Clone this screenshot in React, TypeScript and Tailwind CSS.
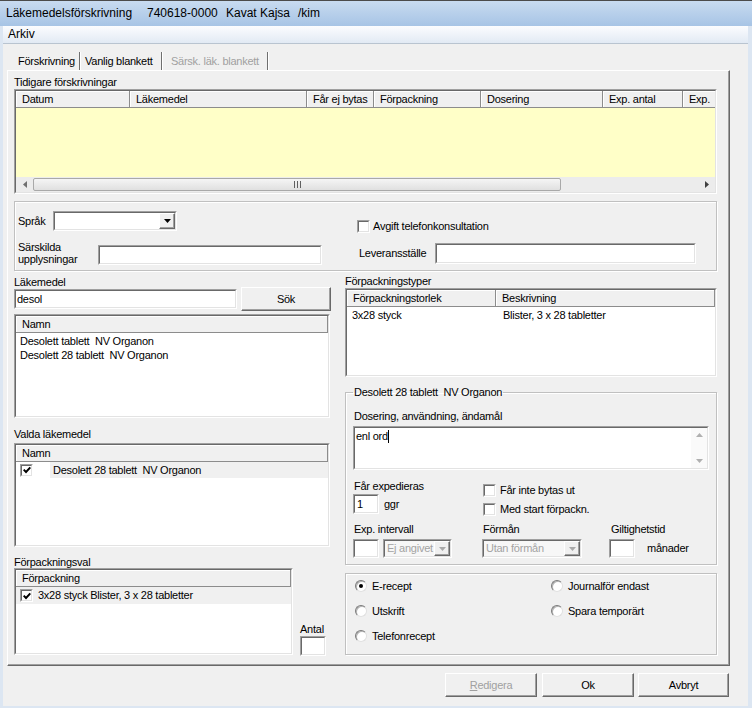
import React from "react"

const sunkO = "border border-t-[#a0a0a0] border-l-[#a0a0a0] border-b-white border-r-white"
const sunkI = "border border-t-[#696969] border-l-[#696969] border-b-[#e3e3e3] border-r-[#e3e3e3]"
const raised = "border border-t-white border-l-white border-b-[#696969] border-r-[#696969] shadow-[inset_-1px_-1px_0_#a0a0a0]"
const group = "border border-[#c0c0c0] shadow-[inset_1px_1px_0_#fff,1px_1px_0_#fff]"

function Sunk({ className = "", inner = "bg-white", children }: { className?: string; inner?: string; children?: React.ReactNode }) {
  return (
    <div className={`${sunkO} ${className}`}>
      <div className={`${sunkI} ${inner} w-full h-full`}>{children}</div>
    </div>
  )
}

function Check({ on = false }: { on?: boolean }) {
  return (
    <Sunk className="w-[13px] h-[13px] shrink-0" inner="bg-white flex items-center justify-center">
      {on && (
        <svg width="8" height="8" viewBox="0 0 8 8">
          <path d="M0.7 3.6 L3 6 L7.3 1.3" stroke="#000" strokeWidth="1.9" fill="none" />
        </svg>
      )}
    </Sunk>
  )
}

function Radio({ on = false }: { on?: boolean }) {
  return (
    <span className="w-[12px] h-[12px] rounded-full bg-white border border-t-[#7a7a7a] border-l-[#7a7a7a] border-b-[#e0e0e0] border-r-[#e0e0e0] shadow-[inset_1px_1px_0_#b4b4b4] flex items-center justify-center shrink-0">
      {on && <span className="w-[4px] h-[4px] rounded-full bg-black" />}
    </span>
  )
}

function Arrow({ dir, color = "#000" }: { dir: "down" | "up" | "left" | "right"; color?: string }) {
  const d = { down: "M0 0 H7 L3.5 4Z", up: "M0 4 H7 L3.5 0Z", left: "M4 0 V7 L0 3.5Z", right: "M0 0 V7 L4 3.5Z" }[dir]
  const [w, h] = dir === "down" || dir === "up" ? [7, 4] : [4, 7]
  return (
    <svg width={w} height={h} viewBox={`0 0 ${w} ${h}`}>
      <path d={d} fill={color} />
    </svg>
  )
}

function Combo({ className = "", text = "", disabled = false }: { className?: string; text?: string; disabled?: boolean }) {
  return (
    <Sunk className={className} inner={`${disabled ? "bg-[#f7f7f7]" : "bg-white"} flex`}>
      <span className={`flex-1 pl-[2px] leading-[15px] whitespace-nowrap overflow-hidden ${disabled ? "text-[#a3a3a3]" : ""}`}>{text}</span>
      <span className={`w-[16px] h-full shrink-0 bg-[#f0f0f0] ${raised} flex items-center justify-center`}>
        <Arrow dir="down" color={disabled ? "#a8a8a8" : "#000"} />
      </span>
    </Sunk>
  )
}

function Head({ cols }: { cols: { t: string; c: string }[] }) {
  return (
    <div className="flex h-[17px] shrink-0 bg-[#f0f0f0] border-b border-b-[#8c8c8c] shadow-[inset_0_1px_0_#fff] overflow-hidden">
      {cols.map(col => (
        <div key={col.t} className={`${col.c} shrink-0 h-full flex items-center pl-[6px] whitespace-nowrap overflow-hidden border-r border-r-[#8c8c8c] shadow-[inset_1px_0_0_#fff]`}>
          {col.t}
        </div>
      ))}
    </div>
  )
}

function Btn({ className = "", children }: { className?: string; children: React.ReactNode }) {
  return <div className={`h-[24px] bg-[#f0f0f0] ${raised} flex items-center justify-center ${className}`}>{children}</div>
}

export default function App() {
  return (
    <div className="w-[752px] h-[708px] flex flex-col bg-[#f0f0f0] overflow-hidden text-[11px] leading-[13px] tracking-[-0.25px] text-black font-['Liberation_Sans',Arial,sans-serif]">
      {/* title bar */}
      <div className="h-[26px] shrink-0 border-t border-t-[#4b4b4b] bg-linear-to-b from-[#c8dbf0] to-[#a7c4e5] flex items-center pl-[6px] text-[12px] tracking-normal whitespace-nowrap">
        <span className="w-[141px]">Läkemedelsförskrivning</span>
        <span className="w-[79px]">740618-0000</span>
        <span className="w-[72px]">Kavat Kajsa</span>
        <span>/kim</span>
      </div>

      <div className="flex-1 flex flex-col border-l-[3px] border-r-[4px] border-b-[2px] border-[#dce6f2]">
        {/* menu */}
        <div className="h-[18px] shrink-0 border-b border-b-[#b9c4d0] bg-linear-to-b from-[#fbfcfe] to-[#e2eaf4] flex items-center pl-[5px] text-[12px] tracking-normal">
          Arkiv
        </div>

        <div className="flex-1 flex flex-col pl-[4px] pt-[6px]">
          {/* tabs */}
          <div className="flex h-[20px] items-end pl-[5px]">
            <div className="h-[18px] w-[68px] pl-[6px] flex items-center border-r border-r-[#6f6f6f] shadow-[1px_0_0_#fff]">Förskrivning</div>
            <div className="h-[18px] w-[82px] pl-[5px] flex items-center border-r border-r-[#6f6f6f] shadow-[1px_0_0_#fff]">Vanlig blankett</div>
            <div className="h-[18px] w-[106px] pl-[9px] flex items-center text-[#a0a0a0] border-r border-r-[#6f6f6f] shadow-[1px_0_0_#fff]">Särsk. läk. blankett</div>
          </div>

          {/* tab page */}
          <div className="w-[723px] h-[596px] shrink-0 border border-l-white border-t-white border-r-[#696969] border-b-[#696969] shadow-[inset_-1px_-1px_0_#a0a0a0] pl-[6px] pt-[5px] flex flex-col">
            <div className="h-[13px]">Tidigare förskrivningar</div>
            <Sunk className="w-[703px] h-[105px]" inner="flex flex-col bg-[#ffffc8] overflow-hidden">
              <Head
                cols={[
                  { t: "Datum", c: "w-[114px]" },
                  { t: "Läkemedel", c: "w-[177px]" },
                  { t: "Får ej bytas", c: "w-[67px]" },
                  { t: "Förpackning", c: "w-[107px]" },
                  { t: "Dosering", c: "w-[122px]" },
                  { t: "Exp. antal", c: "w-[80px]" },
                  { t: "Exp.", c: "w-[40px]" },
                ]}
              />
              <div className="flex-1" />
              <div className="h-[15px] shrink-0 flex items-center bg-[#ececec]">
                <div className="w-[17px] flex justify-center">
                  <Arrow dir="left" color="#707070" />
                </div>
                <div className="w-[528px] h-[13px] rounded-[2px] border border-[#a9a9a9] bg-linear-to-b from-[#f5f5f5] to-[#e0e0e0] flex items-center justify-center">
                  <svg width="7" height="7" viewBox="0 0 7 7">
                    <rect x="0" y="0" width="1" height="7" fill="#606060" />
                    <rect x="3" y="0" width="1" height="7" fill="#606060" />
                    <rect x="6" y="0" width="1" height="7" fill="#606060" />
                  </svg>
                </div>
                <div className="flex-1" />
                <div className="w-[17px] flex justify-center">
                  <Arrow dir="right" color="#404040" />
                </div>
              </div>
            </Sunk>

            {/* språk group */}
            <div className={`mt-[7px] w-[703px] h-[70px] shrink-0 flex ${group}`}>
              <div className="w-[330px] flex flex-col">
                <div className="mt-[9px] h-[20px] flex items-center">
                  <span className="w-[38px] pl-[3px]">Språk</span>
                  <Combo className="w-[124px] h-[20px]" />
                </div>
                <div className="mt-[10px] flex items-start">
                  <span className="w-[83px] pl-[3px] leading-[12px]">
                    Särskilda
                    <br />
                    upplysningar
                  </span>
                  <Sunk className="mt-[4px] w-[224px] h-[20px]" />
                </div>
              </div>
              <div className="flex-1 flex flex-col">
                <div className="mt-[18px] h-[13px] flex items-center">
                  <span className="ml-[12px]">
                    <Check />
                  </span>
                  <span className="ml-[3px]">Avgift telefonkonsultation</span>
                </div>
                <div className="mt-[10px] h-[21px] flex items-center">
                  <span className="ml-[14px] w-[76px]">Leveransställe</span>
                  <Sunk className="w-[261px] h-[21px]" />
                </div>
              </div>
            </div>

            <div className="flex">
              {/* left column */}
              <div className="w-[317px] flex flex-col">
                <div className="mt-[5px] h-[12px] leading-[12px]">Läkemedel</div>
                <div className="h-[22px] flex items-center">
                  <Sunk className="w-[223px] h-[20px]" inner="bg-white pl-[1px] leading-[16px]">
                    desol
                  </Sunk>
                  <Btn className="ml-[4px] w-[90px] h-[22px]">Sök</Btn>
                </div>
                <Sunk className="mt-[4px] w-[316px] h-[104px]" inner="bg-white flex flex-col">
                  <Head cols={[{ t: "Namn", c: "flex-1" }]} />
                  <div className="pt-[1px] pl-[4px] whitespace-pre">
                    <div className="h-[14px] leading-[14px]">Desolett tablett  NV Organon</div>
                    <div className="h-[14px] leading-[14px]">Desolett 28 tablett  NV Organon</div>
                  </div>
                </Sunk>
                <div className="mt-[10px] h-[13px]">Valda läkemedel</div>
                <Sunk className="mt-[2px] w-[316px] h-[104px]" inner="bg-white flex flex-col">
                  <Head cols={[{ t: "Namn", c: "flex-1" }]} />
                  <div className="h-[16px] flex items-center">
                    <span className="ml-[4px]">
                      <Check on />
                    </span>
                    <span className="ml-[17px] flex-1 h-full bg-[#f0f0f0] pl-[3px] flex items-center whitespace-pre">Desolett 28 tablett  NV Organon</span>
                  </div>
                </Sunk>
                <div className="mt-[9px] h-[12px] leading-[12px]">Förpackningsval</div>
                <div className="flex items-end">
                  <Sunk className="w-[279px] h-[87px]" inner="bg-white flex flex-col">
                    <Head cols={[{ t: "Förpackning", c: "flex-1" }]} />
                    <div className="h-[17px] flex items-center bg-[#f0f0f0]">
                      <span className="ml-[4px]">
                        <Check on />
                      </span>
                      <span className="ml-[5px] whitespace-nowrap">3x28 styck Blister, 3 x 28 tabletter</span>
                    </div>
                  </Sunk>
                  <div className="ml-[7px] flex flex-col mb-[-1px]">
                    <span className="h-[13px]">Antal</span>
                    <Sunk className="w-[26px] h-[20px]" />
                  </div>
                </div>
              </div>

              {/* right column */}
              <div className="ml-[14px] w-[372px] flex flex-col">
                <div className="mt-[4px] h-[13px]">Förpackningstyper</div>
                <Sunk className="w-[372px] h-[89px]" inner="bg-white flex flex-col">
                  <Head
                    cols={[
                      { t: "Förpackningstorlek", c: "w-[149px]" },
                      { t: "Beskrivning", c: "flex-1" },
                    ]}
                  />
                  <div className="pt-[1px] flex h-[15px] leading-[14px]">
                    <span className="w-[149px] pl-[5px]">3x28 styck</span>
                    <span className="pl-[7px]">Blister, 3 x 28 tabletter</span>
                  </div>
                </Sunk>

                <fieldset className={`mt-[9px] h-[179px] pl-[7px] pr-[7px] ${group}`}>
                  <legend className="px-[1px] whitespace-pre leading-[13px]">Desolett 28 tablett  NV Organon</legend>
                  <div className="mt-[11px] h-[13px] pl-[1px]">Dosering, användning, ändamål</div>
                  <Sunk className="mt-[3px] w-[356px] h-[44px]" inner="bg-white flex">
                    <div className="flex-1 pl-[1px] pt-[2px] flex items-start">
                      <span>enl ord</span>
                      <span className="w-[1px] h-[13px] bg-black" />
                    </div>
                    <div className="w-[16px] h-full flex flex-col justify-between items-center py-[5px] bg-[#fafafa]">
                      <Arrow dir="up" color="#b0b0b0" />
                      <Arrow dir="down" color="#b0b0b0" />
                    </div>
                  </Sunk>

                  <div className="mt-[10px] flex">
                    <div className="w-[129px] flex flex-col">
                      <span className="h-[13px] pl-[1px]">Får expedieras</span>
                      <div className="mt-[1px] flex items-center">
                        <Sunk className="w-[26px] h-[20px]" inner="bg-white pl-[2px] leading-[16px]">
                          1
                        </Sunk>
                        <span className="ml-[5px]">ggr</span>
                      </div>
                    </div>
                    <div className="w-[127px] flex flex-col pt-[4px]">
                      <div className="h-[13px] flex items-center">
                        <span className="ml-[1px]">
                          <Check />
                        </span>
                        <span className="ml-[4px]">Får inte bytas ut</span>
                      </div>
                      <div className="mt-[6px] h-[13px] flex items-center">
                        <span className="ml-[1px]">
                          <Check />
                        </span>
                        <span className="ml-[4px]">Med start förpackn.</span>
                      </div>
                    </div>
                  </div>

                  <div className="mt-[7px] flex">
                    <div className="w-[129px] flex flex-col">
                      <span className="h-[13px] pl-[1px]">Exp. intervall</span>
                      <div className="mt-[3px] flex">
                        <Sunk className="w-[26px] h-[19px]" />
                        <Combo className="ml-[4px] w-[69px] h-[19px]" text="Ej angivet" disabled />
                      </div>
                    </div>
                    <div className="w-[127px] flex flex-col">
                      <span className="h-[13px] pl-[1px]">Förmån</span>
                      <Combo className="mt-[3px] w-[100px] h-[19px]" text="Utan förmån" disabled />
                    </div>
                    <div className="flex flex-col">
                      <span className="h-[13px] pl-[2px]">Giltighetstid</span>
                      <div className="mt-[3px] flex items-center">
                        <Sunk className="w-[26px] h-[19px]" />
                        <span className="ml-[12px]">månader</span>
                      </div>
                    </div>
                  </div>
                </fieldset>

                <div className={`mt-[8px] h-[82px] pt-[5px] pl-[9px] grid grid-cols-[196px_1fr] gap-y-[11px] content-start ${group}`}>
                  {[
                    ["E-recept", true],
                    ["Journalför endast", false],
                    ["Utskrift", false],
                    ["Spara temporärt", false],
                    ["Telefonrecept", false],
                  ].map(([t, on]) => (
                    <div key={t as string} className="h-[14px] flex items-center">
                      <Radio on={on as boolean} />
                      <span className="ml-[5px]">{t as string}</span>
                    </div>
                  ))}
                </div>
              </div>
            </div>
          </div>

          {/* buttons */}
          <div className="mt-[7px] w-[723px] flex justify-end pr-[1px]">
            <Btn className="w-[92px] text-[#a0a0a0]">
              <span>
                <span className="underline">R</span>edigera
              </span>
            </Btn>
            <Btn className="ml-[5px] w-[92px]">Ok</Btn>
            <Btn className="ml-[4px] w-[91px]">Avbryt</Btn>
          </div>
        </div>
      </div>
    </div>
  )
}
